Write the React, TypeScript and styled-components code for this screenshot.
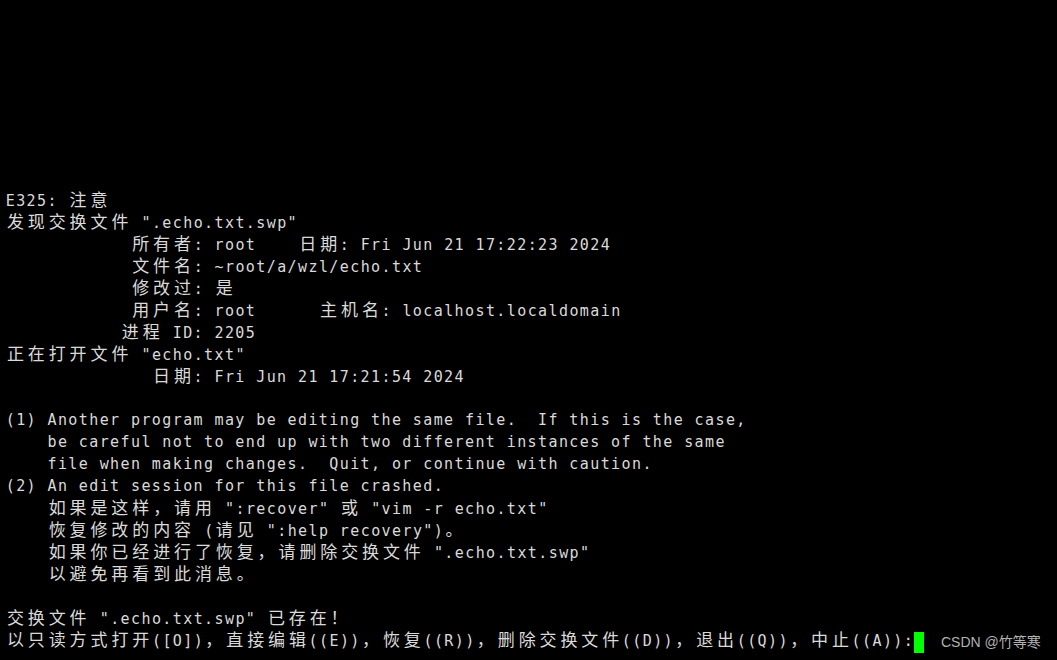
import React from "react";
import styled, { createGlobalStyle } from "styled-components";

const CELL = 10.45;

const GlobalStyle = createGlobalStyle`
  html, body {
    margin: 0;
    padding: 0;
    background: #000;
  }
`;

const Screen = styled.div`
  position: relative;
  box-sizing: border-box;
  width: 100%;
  height: 660px;
  overflow: hidden;
  background: #000;
  padding: 189px 0 0 5px;
  display: flex;
  flex-direction: column;
  font-family: "DejaVu Sans Mono", "Noto Sans CJK SC", monospace;
  font-size: 15px;
  color: #dadada;
`;

const Line = styled.div`
  display: flex;
  align-items: baseline;
  height: 22px;
  line-height: 22px;
  white-space: pre;
`;

const Cell = styled.span<{ $wide?: boolean }>`
  flex: none;
  display: inline-block;
  width: ${(p) => (p.$wide ? CELL * 2 : CELL)}px;
  font-size: ${(p) => (p.$wide ? 17 : 15)}px;
  text-align: center;
`;

const Cursor = styled.span`
  flex: none;
  align-self: flex-start;
  width: ${CELL}px;
  height: 21px;
  margin-top: 3px;
  background: #00ff00;
`;

const Watermark = styled.div`
  position: absolute;
  left: 941px;
  top: 634px;
  font-family: "Liberation Sans", "Noto Sans CJK SC", sans-serif;
  font-size: 14px;
  line-height: 16px;
  color: #b2b2b2;
  white-space: nowrap;
`;

const WIDE =
  /[\u1100-\u115F\u2E80-\uA4CF\uAC00-\uD7A3\uF900-\uFAFF\uFE30-\uFE4F\uFF00-\uFF60\uFFE0-\uFFE6]/;

const lines: string[] = [
  "E325: 注意",
  "发现交换文件 \".echo.txt.swp\"",
  "            所有者: root    日期: Fri Jun 21 17:22:23 2024",
  "            文件名: ~root/a/wzl/echo.txt",
  "            修改过: 是",
  "            用户名: root      主机名: localhost.localdomain",
  "           进程 ID: 2205",
  "正在打开文件 \"echo.txt\"",
  "              日期: Fri Jun 21 17:21:54 2024",
  "",
  "(1) Another program may be editing the same file.  If this is the case,",
  "    be careful not to end up with two different instances of the same",
  "    file when making changes.  Quit, or continue with caution.",
  "(2) An edit session for this file crashed.",
  "    如果是这样，请用 \":recover\" 或 \"vim -r echo.txt\"",
  "    恢复修改的内容 (请见 \":help recovery\")。",
  "    如果你已经进行了恢复，请删除交换文件 \".echo.txt.swp\"",
  "    以避免再看到此消息。",
  "",
  "交换文件 \".echo.txt.swp\" 已存在！",
  "以只读方式打开([O])，直接编辑((E))，恢复((R))，删除交换文件((D))，退出((Q))，中止((A)):",
];

function TermLine({ text, cursor }: { text: string; cursor?: boolean }) {
  const chars = Array.from(text);
  return (
    <Line>
      {chars.map((ch, i) => (
        <Cell key={i} $wide={WIDE.test(ch)}>
          {ch}
        </Cell>
      ))}
      {cursor && <Cursor />}
    </Line>
  );
}

export default function App() {
  return (
    <>
      <GlobalStyle />
      <Screen>
        {lines.map((l, i) => (
          <TermLine key={i} text={l} cursor={i === lines.length - 1} />
        ))}
        <Watermark>CSDN @竹等寒</Watermark>
      </Screen>
    </>
  );
}
